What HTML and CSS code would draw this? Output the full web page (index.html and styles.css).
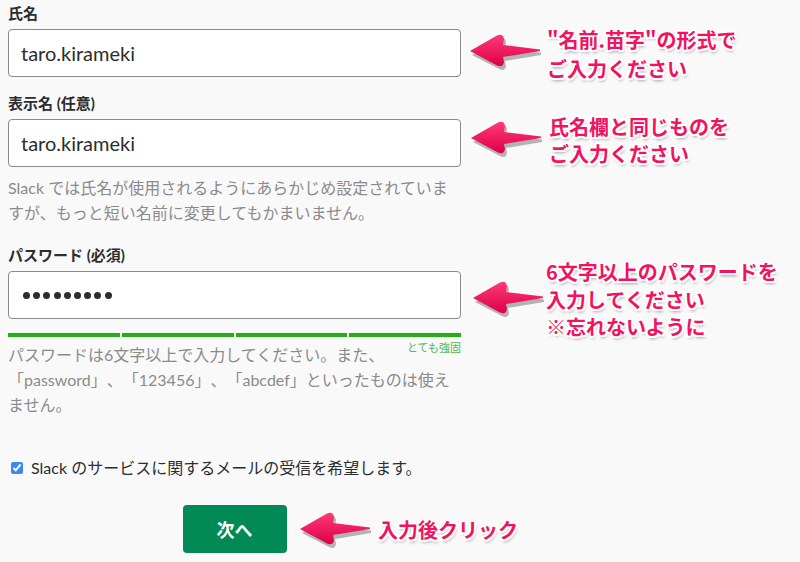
FILE: index.html
```html
<!DOCTYPE html>
<html lang="ja">
<head>
<meta charset="utf-8">
<link rel="stylesheet" href="styles.css">
</head>
<body>
<div class="page">
  <form class="form">
    <div class="field">
      <label class="label">氏名</label>
      <div class="input">taro.kirameki</div>
    </div>
    <div class="field">
      <label class="label">表示名 (任意)</label>
      <div class="input">taro.kirameki</div>
      <p class="help">Slack では氏名が使用されるようにあらかじめ設定されていますが、もっと短い名前に変更してもかまいません。</p>
    </div>
    <div class="field">
      <label class="label">パスワード (必須)</label>
      <div class="input input-pw" aria-label="パスワード"><i></i><i></i><i></i><i></i><i></i><i></i><i></i><i></i><i></i></div>
      <div class="meter"><span></span><span></span><span></span><span></span></div>
      <p class="help help-pw"><span class="strength">とても強固</span>パスワードは6文字以上で入力してください。また、「password」、「123456」、「abcdef」といったものは使えません。</p>
    </div>
    <label class="check"><input type="checkbox" checked> Slack のサービスに関するメールの受信を希望します。</label>
    <div class="actions"><button type="button" class="btn">次へ</button></div>
  </form>

  <div class="note note1"><svg class="arrow" width="74" height="36" viewBox="0 0 74 36"><use href="#arr"/></svg><p>"名前.苗字"の形式で<br>ご入力ください</p></div>
  <div class="note note2"><svg class="arrow" width="74" height="36" viewBox="0 0 74 36"><use href="#arr"/></svg><p>氏名欄と同じものを<br>ご入力ください</p></div>
  <div class="note note3"><svg class="arrow" width="74" height="36" viewBox="0 0 74 36"><use href="#arr"/></svg><p>6文字以上のパスワードを<br>入力してください<br>※忘れないように</p></div>
  <div class="note note4"><svg class="arrow" width="74" height="36" viewBox="0 0 74 36"><use href="#arr"/></svg><p>入力後クリック</p></div>

  <svg width="0" height="0" class="defs">
    <defs>
      <linearGradient id="g" x1="0" y1="0" x2="0" y2="1">
        <stop offset="0" stop-color="#ff3a78"/>
        <stop offset="1" stop-color="#dc0048"/>
      </linearGradient>
      <g id="arr">
        <path d="M3,19 L30,3 Q36,0 37,6 L36,12 L72,16.5 L72,19 L36,25 L37,30 Q36,36 30,33 Z" fill="#000" opacity=".28" transform="translate(1,2)"/>
        <path d="M2,17 L29,1.5 Q35,-1 36,5 L35,11 L72,15.5 L72,17 L35,23 L36,28 Q35,34 29,31.5 Z" fill="url(#g)"/>
      </g>
    </defs>
  </svg>
</div>
</body>
</html>
```

FILE: styles.css
```css
* { box-sizing: border-box; }
html, body { margin: 0; padding: 0; }
body {
  background: #f9f9f9;
  font-family: Lato, "Noto Sans CJK JP", sans-serif;
  color: #2c2d30;
  width: 800px;
  height: 562px;
  overflow: hidden;
  text-spacing-trim: space-all;
}
.page { position: relative; width: 800px; height: 562px; }
.form {
  width: 461px;
  padding: 3px 0 0 8px;
  margin: 0;
}
.field { margin-bottom: 16px; }
.label {
  display: block;
  font-size: 15px;
  font-weight: 700;
  line-height: 20px;
  margin-bottom: 6px;
}
.input {
  height: 48px;
  border: 1px solid #8a8a8a;
  border-radius: 4px;
  background: #fff;
  font-size: 20px;
  line-height: 46px;
  padding: 0 12px;
}
.input-pw {
  display: flex;
  align-items: center;
  gap: 3.2px;
  padding-left: 14px;
}
.input-pw i {
  width: 7px;
  height: 7px;
  border-radius: 50%;
  background: #2c2d30;
}
.help {
  margin: 8px 0 0;
  font-size: 16px;
  line-height: 25px;
  color: #8b8b8b;
}
.field:nth-child(2) { margin-bottom: 20px; }
.meter {
  display: flex;
  gap: 2px;
  margin-top: 14px;
  height: 4px;
}
.meter span { flex: 1; background: #24ad16; }
.help-pw { margin-top: 5px; }
.strength {
  float: right;
  font-size: 11px;
  line-height: 14px;
  margin-top: -1px;
  color: #55b84b;
}
.check {
  display: flex;
  align-items: center;
  gap: 8px;
  margin-top: 41px;
  padding-left: 3px;
  font-size: 16px;
  line-height: 20px;
  color: #2c2d30;
}
.check input {
  margin: 0;
  width: 12px;
  height: 12px;
  accent-color: #3a8af5;
}
.actions { display: flex; justify-content: center; margin-top: 27px; }
.btn {
  width: 104px;
  height: 48px;
  border: 0;
  border-radius: 4px;
  background: #018a55;
  color: #fff;
  font-family: Lato, "Noto Sans CJK JP", sans-serif;
  font-size: 18px;
  font-weight: 700;
}
.defs { position: absolute; }

.note { position: absolute; display: flex; align-items: flex-start; }
.arrow { flex: none; }
.note p {
  margin: 0;
  font-family: "Noto Sans CJK JP", sans-serif;
  font-weight: 700;
  font-size: 20px;
  line-height: 27px;
  color: #f2125f;
  text-shadow:
    -2px 0 0 #fff, 2px 0 0 #fff, 0 -2px 0 #fff, 0 2px 0 #fff,
    -1.5px -1.5px 0 #fff, 1.5px -1.5px 0 #fff, -1.5px 1.5px 0 #fff, 1.5px 1.5px 0 #fff,
    1px 3px 3px rgba(0,0,0,.35);
}
.note1 { left: 468px; top: 34px; }
.note1 p { margin-left: 5px; margin-top: -9px; line-height: 29px; }
.note2 { left: 469px; top: 121px; }
.note2 p { margin-left: 6px; margin-top: -8px; }
.note3 { left: 471px; top: 281px; }
.note3 p { margin-left: 1px; margin-top: -23px; line-height: 27.5px; }
.note4 { left: 298px; top: 512px; }
.note4 p { margin-left: 6px; margin-top: 4px; }
```
